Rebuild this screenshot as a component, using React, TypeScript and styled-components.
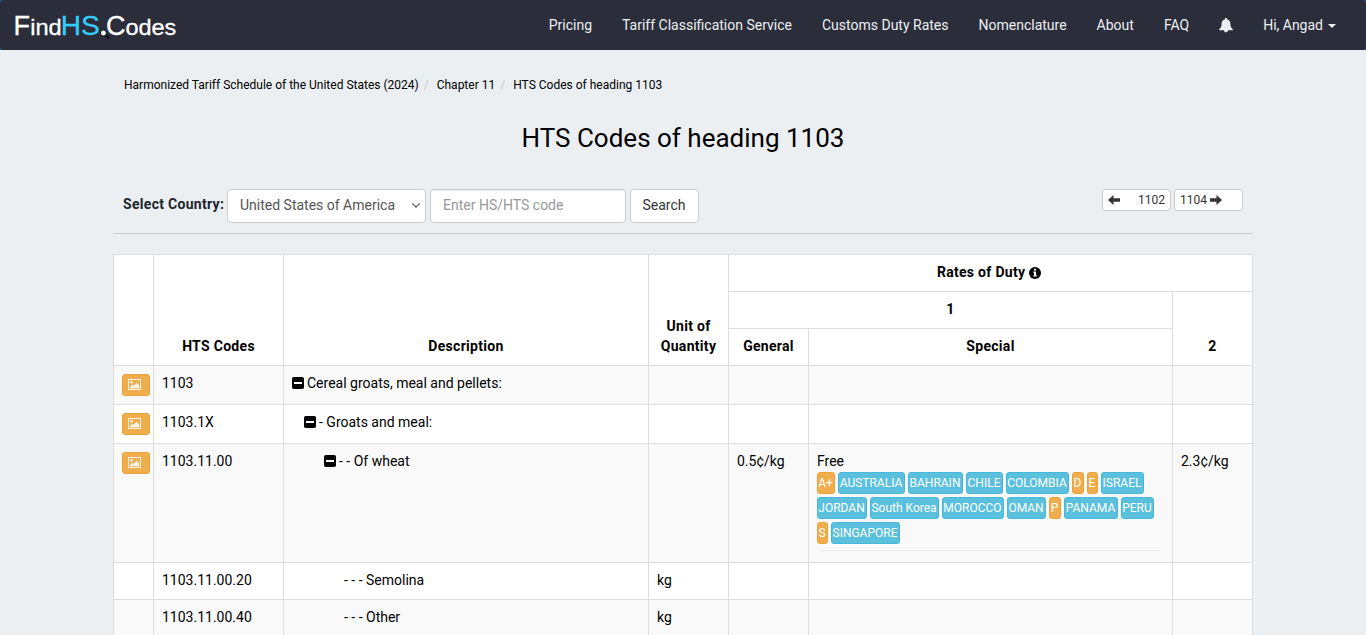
import React from "react";
import styled, { createGlobalStyle } from "styled-components";

const GlobalStyle = createGlobalStyle`
  *, *::before, *::after { box-sizing: border-box; }
  html { background: #ebeff2; }
  body {
    margin: 0;
    height: 635px;
    overflow: hidden;
    background: #ebeff2;
    color: #000;
    font: 14px/20px Roboto, "Liberation Sans", sans-serif;
  }
`;

const NavFrame = styled.div`
  background: #1d5a8c;
`;
const Navbar = styled.nav`
  display: flex;
  justify-content: space-between;
  height: 50px;
  padding: 0 15px 0 10px;
  border-radius: 4px;
  background: #2b2d3a;
`;
const NavLinks = styled.div`
  display: flex;
`;
const NavLink = styled.a`
  display: flex;
  align-items: center;
  padding: 0 15px;
  height: 50px;
  color: #ebeff2;
  white-space: nowrap;
`;
const Caret = styled.span`
  margin-left: 5px;
  margin-top: 1px;
  border-top: 4px solid #ebeff2;
  border-left: 4px solid transparent;
  border-right: 4px solid transparent;
`;
const LogoSvg = styled.svg`
  display: block;
  font-family: "Liberation Sans", sans-serif;
`;

const Container = styled.main`
  width: 1140px;
  margin: 0 auto;
`;
const Breadcrumb = styled.div`
  display: flex;
  height: 20px;
  margin-top: 25px;
  padding-left: 11px;
  font-size: 12px;
  white-space: nowrap;
`;
const Divider = styled.span`
  width: 18px;
  padding-left: 5px;
  color: #ccc;
`;
const Title = styled.h1`
  margin: 25px 0 33px;
  font-size: 26px;
  line-height: 36px;
  font-weight: 400;
  text-align: center;
`;
const Toolbar = styled.div`
  display: flex;
  align-items: flex-start;
  height: 45px;
  padding: 0 10px;
  border-bottom: 1px solid #c9ccd0;
`;
const FieldLabel = styled.label`
  width: 104px;
  padding-top: 5px;
  font-weight: 700;
  letter-spacing: 0.3px;
  color: #212529;
  white-space: nowrap;
`;
const SelectBox = styled.div`
  display: flex;
  justify-content: space-between;
  align-items: center;
  width: 199px;
  height: 34px;
  padding: 0 4px 2px 12px;
  border: 1px solid #ccc;
  border-radius: 4px;
  background: #fff;
  color: #555;
`;
const CodeInput = styled.input`
  width: 196px;
  height: 34px;
  margin: 0 4px;
  padding: 0 12px 2px;
  border: 1px solid #ccc;
  border-radius: 4px;
  background: #fff;
  box-shadow: inset 0 1px 1px rgba(0, 0, 0, 0.075);
  font: inherit;
  &::placeholder { color: #999; }
`;
const SearchButton = styled.button`
  width: 69px;
  height: 34px;
  padding: 0 1px 2px 0;
  border: 1px solid #ccc;
  border-radius: 4px;
  background: #fff;
  color: #333;
  font: inherit;
`;
const Pager = styled.div`
  display: flex;
  gap: 3px;
  margin-left: auto;
`;
const PagerButton = styled.a<{ $spread?: boolean }>`
  display: flex;
  align-items: center;
  justify-content: ${(p) => (p.$spread ? "space-between" : "flex-start")};
  gap: 3px;
  width: 69px;
  height: 22px;
  padding: 0 5px 1px;
  border: 1px solid #ccc;
  border-radius: 3px;
  background: #fff;
  color: #333;
  font-size: 12px;
`;

const DutyTable = styled.table`
  width: 1139px;
  margin-top: 20px;
  table-layout: fixed;
  border-collapse: collapse;
  background: #fff;
`;
const HeadCell = styled.th`
  height: 37px;
  padding: 7px 8px 9px;
  border: 1px solid #ddd;
  font-weight: 700;
  letter-spacing: 0.3px;
  vertical-align: bottom;
  text-align: center;
  white-space: nowrap;
  svg { vertical-align: -2px; margin-right: 3px; }
`;
const Row = styled.tr<{ $height: number }>`
  height: ${(p) => p.$height}px;
  &:nth-child(odd) { background: #f9f9f9; }
`;
const Cell = styled.td`
  padding: 7px 8px 8px;
  border: 1px solid #ddd;
  vertical-align: top;
  white-space: nowrap;
`;
const Description = styled.div<{ $indent: number }>`
  display: flex;
  align-items: center;
  gap: 3px;
  height: 20px;
  padding-left: ${(p) => p.$indent}px;
`;
const ImageButton = styled.button`
  display: flex;
  align-items: center;
  width: 28px;
  height: 22px;
  margin-top: 1px;
  padding: 0 5px;
  border: 1px solid #eea236;
  border-radius: 3px;
  background: #f0ad4e;
`;
const FreeLabel = styled.div`
  margin-bottom: 1px;
`;
const BadgeRow = styled.div`
  display: flex;
  gap: 3px;
  margin-bottom: 3px;
`;
const Badge = styled.span<{ $w: number; $program: boolean }>`
  display: flex;
  justify-content: center;
  width: ${(p) => p.$w}px;
  height: 22px;
  padding-right: 1px;
  border: 1px solid ${(p) => (p.$program ? "#eea236" : "#46b8da")};
  border-radius: 3px;
  background: ${(p) => (p.$program ? "#f0ad4e" : "#5bc0de")};
  color: #fff;
  font-size: 12px;
  line-height: 20px;
`;
const Rule = styled.div`
  margin: 6px 4px 0 3px;
  height: 1px;
  background: #eee;
`;

const Logo = () => (
  <LogoSvg width="172" height="50" viewBox="-5 0 172 50" fill="#fff" stroke="#fff" strokeWidth="0.3">
    <text x="-1.6" y="35" fontSize="27">F</text>
    <text x="15.2" y="35" fontSize="22" textLength="31.5" lengthAdjust="spacingAndGlyphs">ind</text>
    <g fill="#34ccfa" stroke="#34ccfa">
      <text x="45.8" y="35" fontSize="27" textLength="39" lengthAdjust="spacingAndGlyphs">HS</text>
    </g>
    <path d="M90.5 35 L94 38.5" stroke="#0c0c12" strokeWidth="2" />
    <circle cx="88.4" cy="33" r="3" fill="#fff" stroke="#15151d" strokeWidth="1" />
    <text x="91" y="35" fontSize="27">C</text>
    <text x="110.4" y="35" fontSize="22" textLength="51" lengthAdjust="spacingAndGlyphs">odes</text>
  </LogoSvg>
);

const Bell = () => (
  <svg width="14" height="15" viewBox="0 0 14 15" fill="#ebeff2">
    <path d="M7 0C7.8 0 8.2.5 8.1 1.4C10.4 1.9 11.4 3.4 11.4 5.5C11.4 8.4 12 9.8 13.8 11.2V12.2H.2V11.2C2 9.8 2.6 8.4 2.6 5.5C2.6 3.4 3.6 1.9 5.9 1.4C5.8.5 6.2 0 7 0ZM5 12.2H9C8.8 13.6 8 14.2 7 14.2S5.2 13.6 5 12.2Z" />
  </svg>
);

const Chevron = () => (
  <svg width="10" height="8" viewBox="0 0 10 8" fill="none" stroke="#555" strokeWidth="1.3">
    <path d="M1.3 2.4L5 6.1L8.7 2.4" />
  </svg>
);

const Arrow = ({ left = false }: { left?: boolean }) => (
  <svg width="12" height="10" viewBox="0 0 12 10" fill="#333">
    <path d={left ? "M0 5L5.5 0V3.3H12V6.7H5.5V10Z" : "M12 5L6.5 0V3.3H0V6.7H6.5V10Z"} />
  </svg>
);

const Info = () => (
  <svg width="12" height="12" viewBox="0 0 12 12">
    <circle cx="6" cy="6" r="6" fill="#000" />
    <path d="M4.9 1.8H7.1V3.5H4.9ZM4.2 4.6H7.1V8.5H8V9.6H4.2V8.5H5.1V5.7H4.2Z" fill="#fff" />
  </svg>
);

const Minus = () => (
  <svg width="12" height="12" viewBox="0 0 12 12">
    <rect width="12" height="12" rx="1.8" fill="#000" />
    <rect x="2" y="5" width="8" height="2" fill="#fff" />
  </svg>
);

const Picture = () => (
  <svg width="14" height="12" viewBox="0 0 14 12" fill="#fff" fillOpacity="0.85">
    <path fillRule="evenodd" d="M0 0H13V11H0ZM1 1V10H12V1Z" />
    <circle cx="3.5" cy="3.2" r="1.3" />
    <path d="M2 9.2V8L4.5 5.5L6 6.7L8.5 3.7L11.2 6.5V9.2Z" />
  </svg>
);

const navItems = ["Pricing", "Tariff Classification Service", "Customs Duty Rates", "Nomenclature", "About", "FAQ"];
const columns = [40, 130, 365, 80, 80, 364, 80];

const badgeRows: [string, number][][] = [
  [["A+", 18], ["AUSTRALIA", 67], ["BAHRAIN", 55], ["CHILE", 37], ["COLOMBIA", 63], ["D", 12], ["E", 11], ["ISRAEL", 43]],
  [["JORDAN", 50], ["South Korea", 69], ["MOROCCO", 62], ["OMAN", 39], ["P", 12], ["PANAMA", 54], ["PERU", 33]],
  [["S", 11], ["SINGAPORE", 69]],
];

interface Entry {
  code: string;
  text: string;
  indent: number;
  height: number;
  parent?: boolean;
  unit?: string;
  general?: string;
  other?: string;
}
const entries: Entry[] = [
  { code: "1103", text: "Cereal groats, meal and pellets:", indent: 0, height: 39, parent: true },
  { code: "1103.1X", text: "- Groats and meal:", indent: 12, height: 39, parent: true },
  { code: "1103.11.00", text: "- - Of wheat", indent: 32, height: 119, parent: true, general: "0.5¢/kg", other: "2.3¢/kg" },
  { code: "1103.11.00.20", text: "- - - Semolina", indent: 52, height: 37, unit: "kg" },
  { code: "1103.11.00.40", text: "- - - Other", indent: 52, height: 37, unit: "kg" },
];

const SpecialRates = () => (
  <>
    <FreeLabel>Free</FreeLabel>
    {badgeRows.map((row, i) => (
      <BadgeRow key={i}>
        {row.map(([name, w]) => (
          <Badge key={name} $w={w} $program={name.length < 3}>{name}</Badge>
        ))}
      </BadgeRow>
    ))}
    <Rule />
  </>
);

export default function App() {
  return (
    <>
      <GlobalStyle />
      <NavFrame>
        <Navbar>
          <Logo />
          <NavLinks>
            {navItems.map((item) => <NavLink key={item}>{item}</NavLink>)}
            <NavLink><Bell /></NavLink>
            <NavLink>Hi, Angad<Caret /></NavLink>
          </NavLinks>
        </Navbar>
      </NavFrame>
      <Container>
        <Breadcrumb>
          <span>Harmonized Tariff Schedule of the United States (2024)</span>
          <Divider>/</Divider>
          <span>Chapter 11</span>
          <Divider>/</Divider>
          <span>HTS Codes of heading 1103</span>
        </Breadcrumb>
        <Title>HTS Codes of heading 1103</Title>
        <Toolbar>
          <FieldLabel>Select Country:</FieldLabel>
          <SelectBox>United States of America<Chevron /></SelectBox>
          <CodeInput placeholder="Enter HS/HTS code" />
          <SearchButton>Search</SearchButton>
          <Pager>
            <PagerButton $spread><Arrow left />1102</PagerButton>
            <PagerButton>1104<Arrow /></PagerButton>
          </Pager>
        </Toolbar>
        <DutyTable>
          <colgroup>
            {columns.map((w, i) => <col key={i} width={w} />)}
          </colgroup>
          <thead>
            <tr>
              <HeadCell rowSpan={3} />
              <HeadCell rowSpan={3}>HTS Codes</HeadCell>
              <HeadCell rowSpan={3}>Description</HeadCell>
              <HeadCell rowSpan={3}>Unit of<br />Quantity</HeadCell>
              <HeadCell colSpan={3}>Rates of Duty <Info /></HeadCell>
            </tr>
            <tr>
              <HeadCell colSpan={2}>1</HeadCell>
              <HeadCell rowSpan={2}>2</HeadCell>
            </tr>
            <tr>
              <HeadCell>General</HeadCell>
              <HeadCell>Special</HeadCell>
            </tr>
          </thead>
          <tbody>
            {entries.map((e) => (
              <Row key={e.code} $height={e.height}>
                <Cell>{e.parent && <ImageButton><Picture /></ImageButton>}</Cell>
                <Cell>{e.code}</Cell>
                <Cell><Description $indent={e.indent}>{e.parent && <Minus />}{e.text}</Description></Cell>
                <Cell>{e.unit}</Cell>
                <Cell>{e.general}</Cell>
                <Cell>{e.general && <SpecialRates />}</Cell>
                <Cell>{e.other}</Cell>
              </Row>
            ))}
          </tbody>
        </DutyTable>
      </Container>
    </>
  );
}
